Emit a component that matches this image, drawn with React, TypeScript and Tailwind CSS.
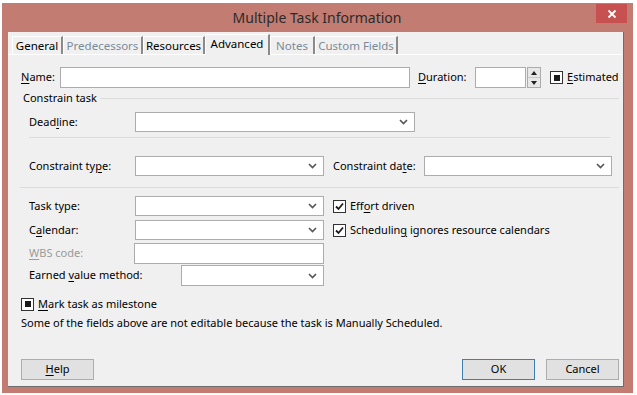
import React from 'react'

const font = { fontFamily: '"Noto Sans", "Segoe UI", sans-serif' }

function U({ children }: { children: React.ReactNode }) {
  return <span className="underline underline-offset-2">{children}</span>
}

function Chevron() {
  return (
    <svg width="9" height="6" viewBox="0 0 9 6" className="shrink-0">
      <path d="M1 1 L4.5 4.5 L8 1" fill="none" stroke="#555" strokeWidth="1.6" />
    </svg>
  )
}

function Select({ w }: { w: string }) {
  return (
    <div className={`${w} h-full bg-white border border-[#acacac] flex items-center justify-end pr-[6px]`}>
      <Chevron />
    </div>
  )
}

function Box({ checked, mixed }: { checked?: boolean; mixed?: boolean }) {
  return (
    <div className="w-[13px] h-[13px] shrink-0 bg-white border border-[#333] flex items-center justify-center">
      {mixed && <div className="w-[6px] h-[6px] bg-[#1a1a1a]" />}
      {checked && (
        <svg width="11" height="11" viewBox="0 0 11 11">
          <path d="M2 5.5 L4.5 8 L9 2.5" fill="none" stroke="#1a1a1a" strokeWidth="1.8" />
        </svg>
      )}
    </div>
  )
}

function Tab({ label, w, dim, active }: { label: string; w: string; dim?: boolean; active?: boolean }) {
  return (
    <div
      className={`${w} flex items-center justify-center border-t border-l border-white border-r-2 border-r-[#8a8a8a] ${
        active ? 'h-[21px] bg-[#f0f0f0] -mb-px pb-[3px]' : 'h-[18px]'
      } ${dim ? 'text-[#7a8a99]' : 'text-black'}`}
    >
      {label}
    </div>
  )
}

function Button({ children, primary }: { children: React.ReactNode; primary?: boolean }) {
  return (
    <div
      className={`w-[73px] h-[21px] flex items-center justify-center bg-[#e1e1e1] border ${
        primary ? 'border-[#3c7fb1]' : 'border-[#adadad]'
      }`}
    >
      {children}
    </div>
  )
}

export default function App() {
  return (
    <div className="w-[637px] h-[395px] bg-white pt-[3px] pl-[2px] overflow-hidden" style={font}>
      <div className="w-[631px] h-[390px] bg-[#c27c71] flex flex-col pl-[6px] pr-[9px] pb-[6px]">
        <div className="h-[29px] shrink-0 relative flex items-center justify-center">
          <span className="text-[14px] text-[#2b2b2b] pl-[2px]">Multiple Task Information</span>
          <div className="absolute right-[-3px] top-[1px] w-[31px] h-[19px] bg-[#c75050] flex items-center justify-center">
            <svg width="10" height="10" viewBox="0 0 10 10">
              <path d="M1.5 1.5 L8.5 8.5 M8.5 1.5 L1.5 8.5" stroke="#fff" strokeWidth="1.8" />
            </svg>
          </div>
        </div>

        <div className="flex-1 bg-[#f0f0f0] border-r border-b border-[#6d6d6d] flex flex-col text-[11px] text-black">
          <div className="h-[22px] flex items-end pl-[4px] pt-px relative z-10 text-[11.5px]">
            <Tab label="General" w="w-[51px]" />
            <Tab label="Predecessors" w="w-[80px]" dim />
            <Tab label="Resources" w="w-[62px]" />
            <Tab label="Advanced" w="w-[65px]" active />
            <Tab label="Notes" w="w-[45px]" dim />
            <Tab label="Custom Fields" w="w-[83px]" dim />
          </div>
          <div className="border-t border-white mr-[1px]" />

          <div className="flex flex-col pl-[13px]">
            {/* name row */}
            <div className="h-[21px] mt-[12px] flex items-center">
              <span className="w-[39px]">
                <U>N</U>ame:
              </span>
              <div className="w-[350px] h-full bg-white border border-[#acacac]" />
              <span className="w-[65px] pl-[8px]">
                <U>D</U>uration:
              </span>
              <div className="w-[51px] h-full bg-white border border-[#acacac]" />
              <div className="w-[14px] h-full ml-[1px] flex flex-col border border-[#acacac] bg-[#e8e8e8]">
                <div className="flex-1 flex items-center justify-center border-b border-[#c8c8c8]">
                  <svg width="6" height="4" viewBox="0 0 6 4"><path d="M0 4 L3 0 L6 4 Z" fill="#222" /></svg>
                </div>
                <div className="flex-1 flex items-center justify-center">
                  <svg width="6" height="4" viewBox="0 0 6 4"><path d="M0 0 L3 4 L6 0 Z" fill="#222" /></svg>
                </div>
              </div>
              <div className="ml-[9px] flex items-center gap-[4px]">
                <Box mixed />
                <span>
                  <U>E</U>stimated
                </span>
              </div>
            </div>

            {/* group title */}
            <div className="h-[14px] mt-[3px] flex items-center pl-[2px]">
              <span>Constrain task</span>
              <div className="flex-1 ml-[3px] mr-[4px] border-t border-[#dcdcdc]" />
            </div>

            <div className="pl-[8px] flex flex-col">
              <div className="h-[20px] mt-[7px] flex items-center">
                <span className="w-[106px]">
                  Dead<U>l</U>ine:
                </span>
                <Select w="w-[280px]" />
              </div>
              <div className="mt-[5px] mr-[13px] border-t border-[#dcdcdc]" />
              <div className="h-[20px] mt-[18px] flex items-center">
                <span className="w-[106px]">
                  Constraint ty<U>p</U>e:
                </span>
                <Select w="w-[189px]" />
                <span className="w-[100px] pl-[9px]">
                  Constraint da<U>t</U>e:
                </span>
                <Select w="w-[188px]" />
              </div>
            </div>

            <div className="mt-[11px] ml-[-1px] mr-[4px] border-t border-[#dcdcdc]" />

            <div className="pl-[8px] flex">
              <div className="flex flex-col">
                <div className="h-[20px] mt-[8px] flex items-center">
                  <span className="w-[106px]">Task type:</span>
                  <Select w="w-[189px]" />
                </div>
                <div className="h-[20px] mt-[4px] flex items-center">
                  <span className="w-[106px]">
                    C<U>a</U>lendar:
                  </span>
                  <Select w="w-[189px]" />
                </div>
                <div className="h-[21px] mt-[3px] flex items-center">
                  <span className="w-[105px] text-[#9a9a9a]">
                    <U>W</U>BS code:
                  </span>
                  <div className="w-[190px] h-full bg-white border border-[#acacac]" />
                </div>
                <div className="h-[21px] mt-px flex items-center">
                  <span className="w-[152px]">
                    Earned <U>v</U>alue method:
                  </span>
                  <Select w="w-[143px]" />
                </div>
              </div>
              <div className="flex flex-col pl-[9px]">
                <div className="h-[20px] mt-[8px] flex items-center gap-[4px]">
                  <Box checked />
                  <span>
                    Eff<U>o</U>rt driven
                  </span>
                </div>
                <div className="h-[20px] mt-[4px] flex items-center gap-[4px]">
                  <Box checked />
                  <span>
                    Schedulin<U>g</U> ignores resource calendars
                  </span>
                </div>
              </div>
            </div>

            <div className="h-[14px] mt-[11px] flex items-center gap-[4px]">
              <Box mixed />
              <span>
                <U>M</U>ark task as milestone
              </span>
            </div>
            <div className="h-[16px] mt-[4px] flex items-center">
              Some of the fields above are not editable because the task is Manually Scheduled.
            </div>

            <div className="h-[21px] mt-[28px] flex items-center pr-[4px]">
              <Button>
                <span>
                  <U>H</U>elp
                </span>
              </Button>
              <div className="flex-1" />
              <Button primary>OK</Button>
              <div className="w-[11px]" />
              <Button>Cancel</Button>
            </div>
          </div>
        </div>
      </div>
    </div>
  )
}
